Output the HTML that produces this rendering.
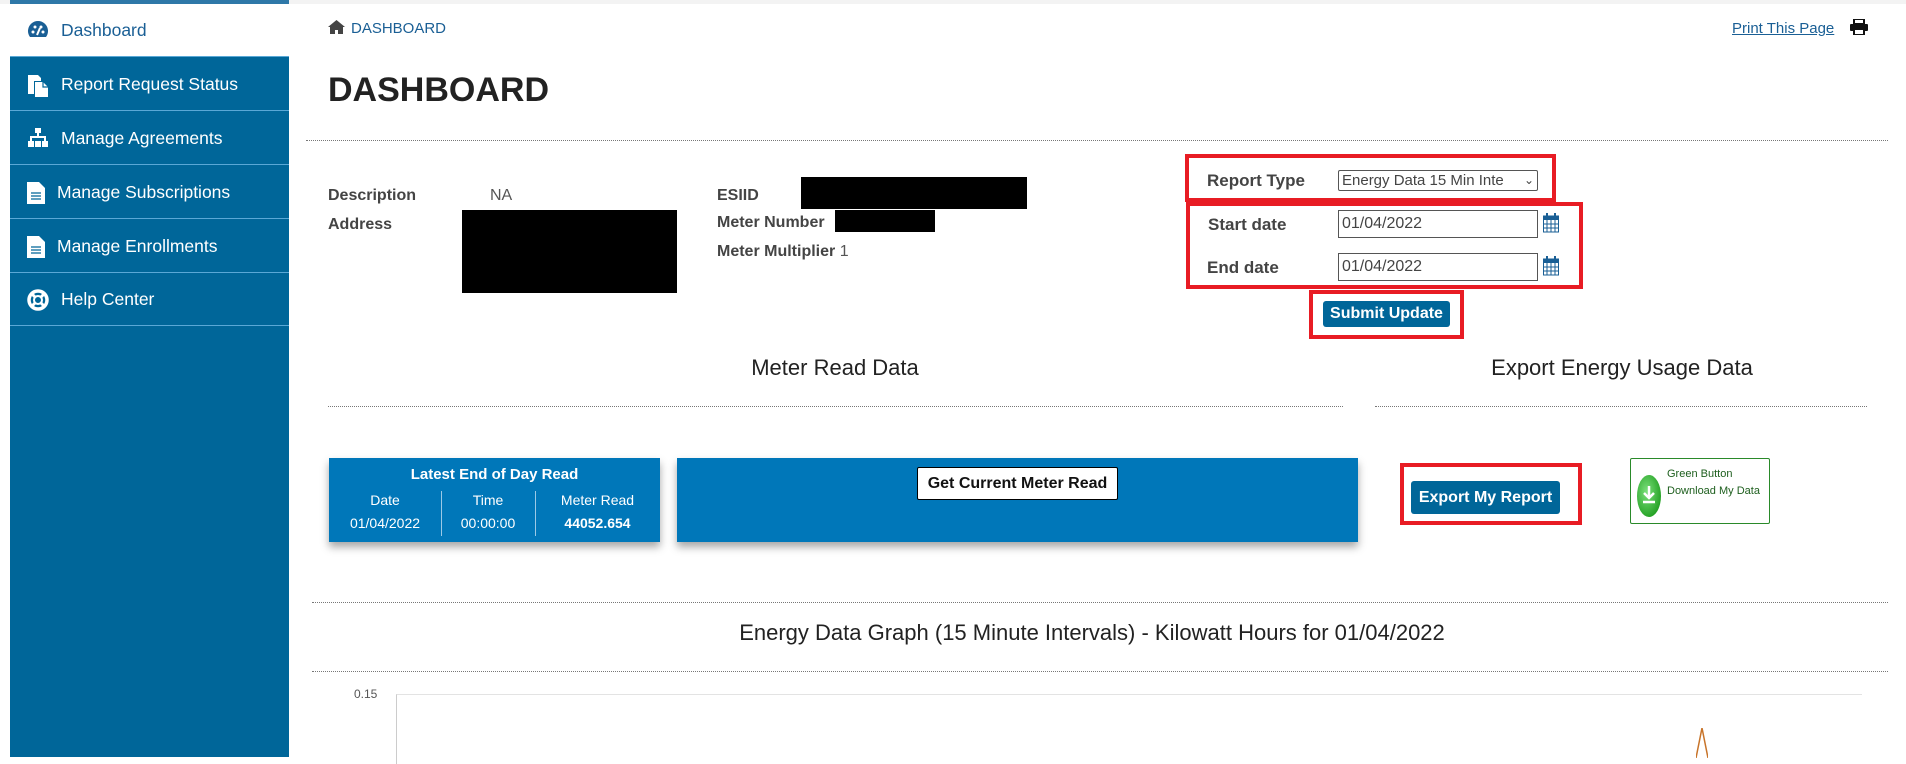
<!DOCTYPE html>
<html><head><meta charset="utf-8"><style>
*{margin:0;padding:0;box-sizing:border-box}
body{width:1906px;height:757px;overflow:hidden;background:#fff;font-family:"Liberation Sans",Arial,sans-serif;position:relative;color:#333}
.a{position:absolute}
.side{left:10px;top:0;width:279px;height:757px;background:#006699}
.item{position:absolute;left:0;width:279px;height:54px;border-bottom:1px solid #5aa8d6;color:#fff;font-size:17.5px;line-height:54px;padding-left:51px}
.item svg{position:absolute;left:17px;top:17px}
.lbl{font-size:16px;font-weight:bold;color:#444}
.dot{position:absolute;border-top:1px dotted #777;height:0}
.red{position:absolute;border:4px solid #e81c24}
.btn{position:absolute;background:#006699;color:#fff;font-weight:bold;font-family:"Liberation Sans Narrow","Liberation Sans",sans-serif;text-align:center;border-radius:3px}
.h{position:absolute;font-family:"Liberation Sans Narrow","Liberation Sans",sans-serif;font-size:22px;color:#222;text-align:center}
.inp{position:absolute;border:1px solid #555;font-size:16px;color:#444;padding-left:3px;background:#fff}
.blue{position:absolute;background:#0077b9;box-shadow:0 5px 8px rgba(0,0,0,.35)}
.nar{font-family:"Liberation Sans Narrow","Liberation Sans",sans-serif}
</style></head><body>
<div class="a" style="left:0;top:0;width:1906px;height:4px;background:#f3f3f3"></div>
<div class="a side">
 <div class="item" style="top:0;height:57px;background:#fff;color:#1a5f95;border-top:4px solid #2e78a8;line-height:52px">
  <svg width="22" height="20" viewBox="0 0 22 20" style="top:16px"><path d="M3 17A10 10 0 1 1 19 17Z" fill="#1a5f95"/><circle cx="6" cy="12" r="1.5" fill="#fff"/><circle cx="8" cy="7" r="1.5" fill="#fff"/><circle cx="14" cy="7" r="1.5" fill="#fff"/><circle cx="16" cy="12" r="1.5" fill="#fff"/><path d="M10 15L13 8" stroke="#fff" stroke-width="2"/></svg>Dashboard</div>
 <div class="item" style="top:57px"><svg width="22" height="24" viewBox="0 0 22 24"><path d="M1 1h10l3 3v3H7v13H1z" fill="#fff"/><path d="M8 8h8l5 5v10H8z" fill="#fff"/><path d="M16 8v5h5" fill="none" stroke="#006699" stroke-width="1.2"/></svg>Report Request Status</div>
 <div class="item" style="top:111px"><svg width="22" height="20" viewBox="0 0 22 20"><rect x="8" y="0" width="6" height="5" fill="#fff"/><path d="M11 5v4M4 13V9h14v4" stroke="#fff" stroke-width="2" fill="none"/><rect x="1" y="13" width="6" height="6" fill="#fff"/><rect x="8" y="13" width="6" height="6" fill="#fff"/><rect x="15" y="13" width="6" height="6" fill="#fff"/></svg>Manage Agreements</div>
 <div class="item" style="top:165px;padding-left:47px"><svg width="18" height="22" viewBox="0 0 18 22"><path d="M0 0h12l6 6v16H0z" fill="#fff"/><path d="M4 11h10M4 14h10M4 17h10" stroke="#006699" stroke-width="1.3"/></svg>Manage Subscriptions</div>
 <div class="item" style="top:219px;padding-left:47px"><svg width="18" height="22" viewBox="0 0 18 22"><path d="M0 0h12l6 6v16H0z" fill="#fff"/><path d="M4 11h10M4 14h10M4 17h10" stroke="#006699" stroke-width="1.3"/></svg>Manage Enrollments</div>
 <div class="item" style="top:272px;height:54px"><svg width="22" height="22" viewBox="0 0 22 22"><circle cx="11" cy="11" r="9" stroke="#fff" stroke-width="3.5" fill="none"/><circle cx="11" cy="11" r="4" stroke="#fff" stroke-width="2" fill="none"/><path d="M4 4l4 4M18 4l-4 4M4 18l4-4M18 18l-4-4" stroke="#fff" stroke-width="3"/></svg>Help Center</div>
</div>

<svg class="a" style="left:328px;top:20px" width="17" height="14" viewBox="0 0 17 14"><path d="M8.5 0L0 7h2v7h5v-4h3v4h5V7h2z" fill="#444"/></svg>
<div class="a" style="left:351px;top:20px;font-size:15px;color:#1a5f95">DASHBOARD</div>
<div class="a" style="left:1732px;top:20px;font-size:15px;color:#1a5f95;text-decoration:underline">Print This Page</div>
<svg class="a" style="left:1850px;top:19px" width="18" height="16" viewBox="0 0 18 16"><rect x="4" y="0" width="10" height="5" fill="none" stroke="#111" stroke-width="2"/><rect x="0" y="5" width="18" height="7" rx="1" fill="#111"/><rect x="4" y="10" width="10" height="6" fill="#fff" stroke="#111" stroke-width="2"/></svg>
<div class="a" style="left:328px;top:71px;font-size:34px;font-weight:bold;color:#222">DASHBOARD</div>
<div class="dot" style="left:306px;top:140px;width:1582px"></div>

<div class="a lbl" style="left:328px;top:187px">Description</div>
<div class="a" style="left:490px;top:187px;font-size:16px;color:#555">NA</div>
<div class="a lbl" style="left:328px;top:216px">Address</div>
<div class="a" style="left:462px;top:210px;width:215px;height:83px;background:#000"></div>
<div class="a lbl" style="left:717px;top:187px">ESIID</div>
<div class="a" style="left:801px;top:177px;width:226px;height:32px;background:#000"></div>
<div class="a lbl" style="left:717px;top:214px">Meter Number</div>
<div class="a" style="left:835px;top:210px;width:100px;height:22px;background:#000"></div>
<div class="a lbl" style="left:717px;top:243px">Meter Multiplier <span style="font-weight:normal;color:#555">1</span></div>

<div class="red" style="left:1185px;top:154px;width:371px;height:48px"></div>
<div class="a lbl nar" style="left:1207px;top:171px;font-size:17px">Report Type</div>
<div class="inp" style="left:1338px;top:170px;width:200px;height:21px;font-size:15px;line-height:19px;border-radius:2px;overflow:hidden;white-space:nowrap">Energy Data 15 Min Inte<span style="position:absolute;right:3px;top:0;font-size:12px;background:#fff">&#8964;</span></div>
<div class="red" style="left:1186px;top:202px;width:397px;height:87px"></div>
<div class="a lbl nar" style="left:1208px;top:215px;font-size:17px">Start date</div>
<div class="inp" style="left:1338px;top:210px;width:200px;height:28px;line-height:26px">01/04/2022</div>
<div class="a lbl nar" style="left:1207px;top:258px;font-size:17px">End date</div>
<div class="inp" style="left:1338px;top:253px;width:200px;height:28px;line-height:26px">01/04/2022</div>
<svg class="a" style="left:1543px;top:213px" width="16" height="20" viewBox="0 0 16 20"><rect x="0.5" y="3" width="15" height="16" fill="#fff" stroke="#1a5f95"/><rect x="0.5" y="3" width="15" height="4" fill="#1a5f95"/><path d="M0 11h16M0 15h16M4 7v12M8 7v12M12 7v12" stroke="#1a5f95"/><rect x="3" y="0" width="2" height="5" fill="#1a5f95"/><rect x="11" y="0" width="2" height="5" fill="#1a5f95"/></svg>
<svg class="a" style="left:1543px;top:256px" width="16" height="20" viewBox="0 0 16 20"><rect x="0.5" y="3" width="15" height="16" fill="#fff" stroke="#1a5f95"/><rect x="0.5" y="3" width="15" height="4" fill="#1a5f95"/><path d="M0 11h16M0 15h16M4 7v12M8 7v12M12 7v12" stroke="#1a5f95"/><rect x="3" y="0" width="2" height="5" fill="#1a5f95"/><rect x="11" y="0" width="2" height="5" fill="#1a5f95"/></svg>
<div class="red" style="left:1309px;top:290px;width:155px;height:49px"></div>
<div class="btn" style="left:1323px;top:301px;width:127px;height:26px;line-height:26px;font-size:16px">Submit Update</div>

<div class="h" style="left:635px;top:355px;width:400px">Meter Read Data</div>
<div class="dot" style="left:328px;top:406px;width:1015px"></div>
<div class="h" style="left:1422px;top:355px;width:400px">Export Energy Usage Data</div>
<div class="dot" style="left:1375px;top:406px;width:492px"></div>

<div class="blue" style="left:329px;top:458px;width:331px;height:84px;color:#fff;font-family:'Liberation Sans Narrow','Liberation Sans',sans-serif">
 <div class="a" style="left:0;top:8px;width:331px;text-align:center;font-weight:bold;font-size:15px">Latest End of Day Read</div>
 <div class="a" style="left:112px;top:33px;height:45px;border-left:1px solid #9cc9e6"></div>
 <div class="a" style="left:206px;top:33px;height:45px;border-left:1px solid #9cc9e6"></div>
 <div class="a" style="left:0;top:34px;width:112px;text-align:center;font-size:14px">Date</div>
 <div class="a" style="left:112px;top:34px;width:94px;text-align:center;font-size:14px">Time</div>
 <div class="a" style="left:206px;top:34px;width:125px;text-align:center;font-size:14px">Meter Read</div>
 <div class="a" style="left:0;top:57px;width:112px;text-align:center;font-size:14px">01/04/2022</div>
 <div class="a" style="left:112px;top:57px;width:94px;text-align:center;font-size:14px">00:00:00</div>
 <div class="a" style="left:206px;top:57px;width:125px;text-align:center;font-size:14px;font-weight:bold">44052.654</div>
</div>
<div class="blue" style="left:677px;top:458px;width:681px;height:84px"></div>
<div class="a nar" style="left:917px;top:467px;width:201px;height:33px;background:#fff;border:1px solid #000;border-radius:2px;font-weight:bold;font-size:16px;text-align:center;line-height:31px;color:#111">Get Current Meter Read</div>

<div class="red" style="left:1400px;top:463px;width:182px;height:62px"></div>
<div class="btn" style="left:1411px;top:481px;width:149px;height:33px;line-height:33px;font-size:16px">Export My Report</div>
<div class="a" style="left:1630px;top:458px;width:140px;height:66px;border:1px solid #2a8a2a;border-radius:2px"></div>
<svg class="a" style="left:1636px;top:474px" width="26" height="44" viewBox="0 0 26 44"><defs><radialGradient id="g" cx=".4" cy=".4" r=".7"><stop offset="0" stop-color="#7de07d"/><stop offset="1" stop-color="#1a9a1a"/></radialGradient></defs><ellipse cx="13" cy="22" rx="12" ry="21" fill="url(#g)"/><path d="M13 12v12M8 19l5 5 5-5M7 28h12" stroke="#fff" stroke-width="2.5" fill="none"/></svg>
<div class="a nar" style="left:1667px;top:466px;font-size:11px;color:#1d5e1d;line-height:17px">Green Button<br>Download My Data</div>

<div class="dot" style="left:312px;top:602px;width:1576px"></div>
<div class="h" style="left:592px;top:620px;width:1000px">Energy Data Graph (15 Minute Intervals) - Kilowatt Hours for 01/04/2022</div>
<div class="dot" style="left:312px;top:671px;width:1576px"></div>
<div class="a nar" style="left:354px;top:687px;font-size:12px;color:#555">0.15</div>
<div class="a" style="left:396px;top:694px;width:1466px;height:70px;border-left:1px solid #ccc;border-top:1px solid #e3e3e3"></div>
<svg class="a" style="left:1696px;top:728px" width="12" height="30" viewBox="0 0 12 30"><path d="M0 30L6 0 12 30" stroke="#c8742a" stroke-width="1.5" fill="none"/></svg>
</body></html>
